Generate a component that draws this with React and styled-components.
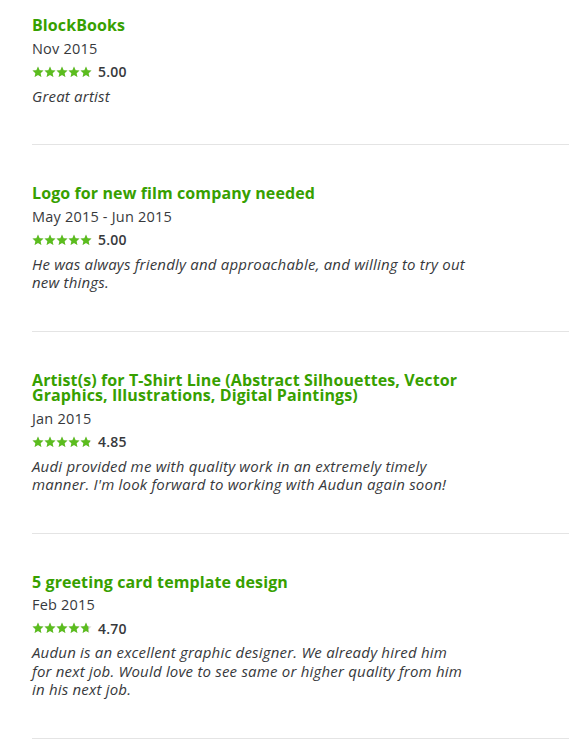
import React from 'react'
import styled, { createGlobalStyle } from 'styled-components'

const GlobalStyle = createGlobalStyle`
  body {
    margin: 0;
    background: #fff;
    font-family: 'Open Sans', 'Liberation Sans', sans-serif;
    color: #37393c;
  }
`

const reviews = [
  {
    title: 'BlockBooks',
    date: 'Nov 2015',
    score: 5,
    comment: 'Great artist'
  },
  {
    title: 'Logo for new film company needed',
    date: 'May 2015 - Jun 2015',
    score: 5,
    comment: 'He was always friendly and approachable, and willing to try out new things.'
  },
  {
    title: 'Artist(s) for T-Shirt Line (Abstract Silhouettes, Vector Graphics, Illustrations, Digital Paintings)',
    date: 'Jan 2015',
    score: 4.85,
    comment: "Audi provided me with quality work in an extremely timely manner. I'm look forward to working with Audun again soon!"
  },
  {
    title: '5 greeting card template design',
    date: 'Feb 2015',
    score: 4.7,
    comment: 'Audun is an excellent graphic designer. We already hired him for next job. Would love to see same or higher quality from him in his next job.'
  }
]

const List = styled.ul`
  list-style: none;
  margin: 0;
  padding: 0 0 0 32px;
`

const Item = styled.li`
  padding: 41px 0 39px;
  border-bottom: 1px solid #e4e4e4;

  &:first-child {
    padding-top: 18px;
  }
`

const Title = styled.h3`
  margin: 0;
  max-width: 440px;
  font-size: 16px;
  line-height: 15.5px;
  font-weight: 700;
  letter-spacing: 0.1px;
  color: #37a000;
`

const DateLine = styled.div`
  margin-top: 5px;
  font-size: 14.5px;
  line-height: 20px;
  letter-spacing: 0.2px;
`

const Rating = styled.div`
  display: flex;
  align-items: center;
  gap: 6px;
  margin-top: 3px;
  height: 20px;
`

const Stars = styled.span`
  display: inline-flex;
`

const Score = styled.span`
  font-size: 14px;
  font-weight: 600;
  letter-spacing: 0.2px;
`

const Comment = styled.p`
  margin: 5px 0 0;
  max-width: 436px;
  font-size: 15px;
  line-height: 18.5px;
  letter-spacing: 0.2px;
  font-style: italic;
`

const STAR = 'M6 0.6l1.6 3.6 3.9.4-2.9 2.6.8 3.9L6 9.1 2.6 11.1l.8-3.9L.5 4.6l3.9-.4z'

const Star = ({ fill, id }) => (
  <svg width='12' height='12' viewBox='0 0 12 12'>
    <defs>
      <clipPath id={id}>
        <rect x='0' y='0' width={12 * fill} height='12' />
      </clipPath>
    </defs>
    <path d={STAR} fill='#d8d8d8' />
    <path d={STAR} fill='#5bbd1e' clipPath={`url(#${id})`} />
  </svg>
)

const StarRow = ({ score, index }) => (
  <Stars>
    {[0, 1, 2, 3, 4].map(i => {
      const fill = Math.max(0, Math.min(1, score - i))
      return <Star key={i} fill={fill} id={`star-${index}-${i}`} />
    })}
  </Stars>
)

const App = () => (
  <>
    <GlobalStyle />
    <List>
      {reviews.map((review, index) => (
        <Item key={review.title}>
          <Title>{review.title}</Title>
          <DateLine>{review.date}</DateLine>
          <Rating>
            <StarRow score={review.score} index={index} />
            <Score>{review.score.toFixed(2)}</Score>
          </Rating>
          <Comment>{review.comment}</Comment>
        </Item>
      ))}
    </List>
  </>
)

export default App
